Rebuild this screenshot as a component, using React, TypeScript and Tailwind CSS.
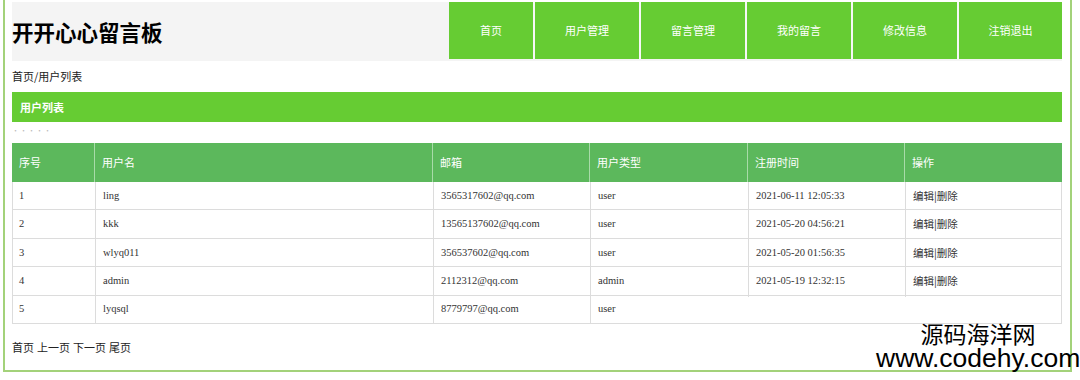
import React from 'react';

const navItems = ['首页', '用户管理', '留言管理', '我的留言', '修改信息', '注销退出'];

const columns = ['序号', '用户名', '邮箱', '用户类型', '注册时间', '操作'];

const users = [
  { id: 1, name: 'ling', email: '3565317602@qq.com', type: 'user', time: '2021-06-11 12:05:33' },
  { id: 2, name: 'kkk', email: '13565137602@qq.com', type: 'user', time: '2021-05-20 04:56:21' },
  { id: 3, name: 'wlyq011', email: '356537602@qq.com', type: 'user', time: '2021-05-20 01:56:35' },
  { id: 4, name: 'admin', email: '2112312@qq.com', type: 'admin', time: '2021-05-19 12:32:15' },
  { id: 5, name: 'lyqsql', email: '8779797@qq.com', type: 'user', time: '' },
];

const grid = 'grid grid-cols-[83px_338px_157px_158px_157px_157px]';
const cjk = "font-['Noto_Sans_CJK_SC',sans-serif]";
const serif = "font-['Liberation_Serif','Noto_Sans_CJK_SC',serif]";

export default function App() {
  return (
    <div className={`relative w-[1080px] h-[380px] bg-white text-[#333] ${cjk}`}>
      <div className="ml-[3px] w-[1069px] h-[372px] border-x-2 border-b-2 border-[#a3d27a] pl-[7px] pr-[8px] pt-[2px]">
        {/* header */}
        <div className="flex h-[59px] bg-[#f4f4f4]">
          <div className="flex-1 flex items-center">
            <h1 className="text-[21.5px] font-bold text-black leading-none">开开心心留言板</h1>
          </div>
          <nav className="flex gap-[2px] h-[57px] bg-[#f7f7f7]">
            {navItems.map((item, i) => (
              <a
                key={item}
                className={`flex items-center justify-center bg-[#66cc33] text-white text-[11px] ${
                  i === 0 ? 'w-[84px]' : i === 5 ? 'w-[103px]' : 'w-[104px]'
                }`}
              >
                {item}
              </a>
            ))}
          </nav>
        </div>

        {/* breadcrumb */}
        <div className="h-[30px] flex items-center text-[11px] text-[#222]">首页/用户列表</div>

        <div className="mt-[1px] h-[30px] flex items-center bg-[#66cc33] pl-[8px] text-[11px] font-bold text-white">
          用户列表
        </div>

        <div className="h-[21px] pt-[3px] text-[7px] leading-[10px] tracking-[1px] text-[#bbb]">·····</div>

        {/* table */}
        <div className="text-[11px]">
          <div className={`${grid} h-[39px] bg-[#5cb85c] text-white`}>
            {columns.map((c, i) => (
              <div
                key={c}
                className={`flex items-center pl-[7px] ${i < 5 ? 'border-r border-[#a9dba9]' : ''}`}
              >
                {c}
              </div>
            ))}
          </div>
          {users.map((u) => (
            <div key={u.id} className={`${grid} h-[28.4px] border-b border-x border-[#dcdcdc] text-[10.5px] ${serif}`}>
              <div className="flex items-center pl-[6px] border-r border-[#dcdcdc]">{u.id}</div>
              <div className="flex items-center pl-[7px] border-r border-[#dcdcdc]">{u.name}</div>
              <div className="flex items-center pl-[7px] border-r border-[#dcdcdc]">{u.email}</div>
              <div className="flex items-center pl-[7px] border-r border-[#dcdcdc]">{u.type}</div>
              <div className="flex items-center pl-[7px] border-r border-[#dcdcdc]">{u.time}</div>
              <div className={`flex items-center pl-[7px] ${cjk} text-[10.5px]`}>{u.time ? '编辑|删除' : ''}</div>
            </div>
          ))}
        </div>

        {/* pagination */}
        <div className="h-[46px] flex items-center gap-[3px] text-[11px] text-[#222]">
          <a>首页</a>
          <a>上一页</a>
          <a>下一页</a>
          <a>尾页</a>
        </div>
      </div>

      {/* watermark */}
      <div className="absolute left-[693px] top-[297px] w-[368px] h-[26px] bg-white" />
      <div className="absolute left-[876px] top-[322px] flex flex-col items-center text-black">
        <span className="text-[23px] leading-[23px] font-['Noto_Sans_CJK_SC',sans-serif]">源码海洋网</span>
        <span className="text-[26.5px] leading-[26px] font-['Liberation_Sans',sans-serif]">www.codehy.com</span>
      </div>
    </div>
  );
}
